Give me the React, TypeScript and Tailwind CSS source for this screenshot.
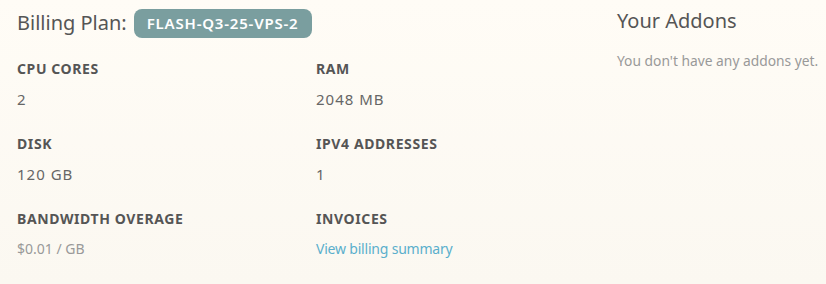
import React from "react";

const specs = [
  { label: "CPU CORES", value: "2" },
  { label: "RAM", value: "2048 MB" },
  { label: "DISK", value: "120 GB" },
  { label: "IPV4 ADDRESSES", value: "1" },
];

function App() {
  return (
    <div
      className="w-[826px] h-[284px] flex bg-gradient-to-b from-[#fffcf6] to-[#fbf8f1] text-[#555]"
      style={{ fontFamily: '"Noto Sans", "Open Sans", sans-serif' }}
    >
      <div className="w-[600px] pl-[17px] pt-[8px]">
        <div className="flex items-center gap-[7px] h-[30px]">
          <h2 className="text-[20px] text-[#555] leading-none">Billing Plan:</h2>
          <span className="bg-[#7a9e9f] text-white text-[15px] font-semibold tracking-[0.8px] rounded-[8px] px-[13px] h-[29px] flex items-center">
            FLASH-Q3-25-VPS-2
          </span>
        </div>
        <div className="grid grid-cols-[299px_1fr] mt-[21px] gap-y-[24px]">
          {specs.map((s) => (
            <div key={s.label} className="flex flex-col gap-[9px]">
              <div className="text-[14px] font-bold tracking-[0.6px] text-[#555] leading-[20px]">{s.label}</div>
              <div className="text-[15px] tracking-[1px] text-[#666] leading-[22px]">{s.value}</div>
            </div>
          ))}
          <div className="flex flex-col gap-[9px]">
            <div className="text-[14px] font-bold tracking-[0.6px] text-[#555] leading-[20px]">BANDWIDTH OVERAGE</div>
            <div className="text-[14px] text-[#999] leading-[22px]">$0.01 / GB</div>
          </div>
          <div className="flex flex-col gap-[9px]">
            <div className="text-[14px] font-bold tracking-[0.6px] text-[#555] leading-[20px]">INVOICES</div>
            <a href="#" className="text-[14px] text-[#5aafcc] leading-[22px] tracking-[-0.2px]">
              View billing summary
            </a>
          </div>
        </div>
      </div>
      <div className="flex-1 pl-[17px] pt-[6px]">
        <h3 className="text-[20px] leading-[26px] mt-[2px]">Your Addons</h3>
        <p className="text-[13.8px] text-[#999] mt-[17px]">You don't have any addons yet.</p>
      </div>
    </div>
  );
}

export default App;
